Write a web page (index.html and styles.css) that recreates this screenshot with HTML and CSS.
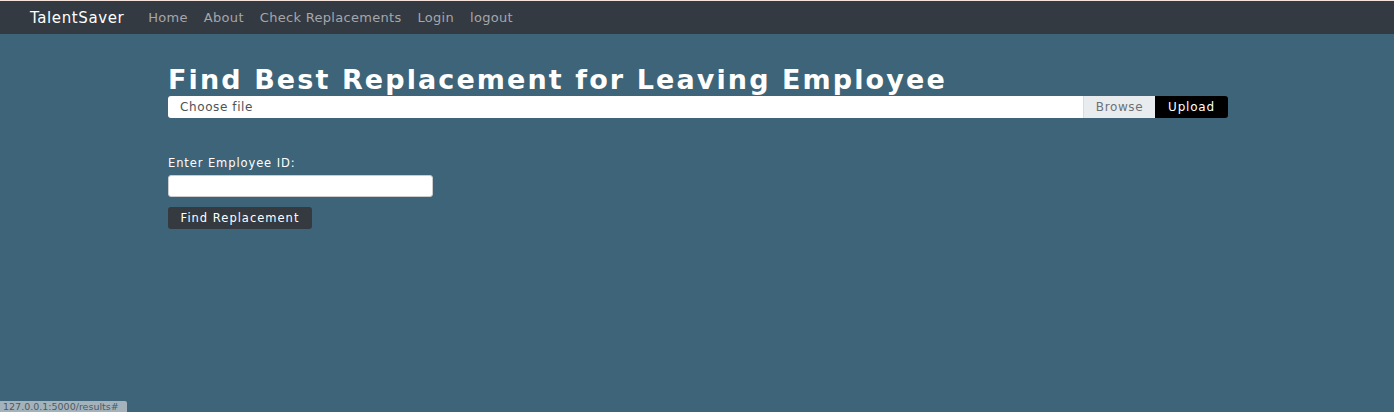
FILE: index.html
```html
<!DOCTYPE html>
<html lang="en">
<head>
<meta charset="utf-8">
<title>TalentSaver</title>
<link rel="stylesheet" href="styles.css">
</head>
<body>
<div class="topline"></div>
<nav class="navbar">
  <a class="brand" href="#">TalentSaver</a>
  <ul class="nav-links">
    <li><a href="#">Home</a></li>
    <li><a href="#">About</a></li>
    <li><a href="#">Check Replacements</a></li>
    <li><a href="#">Login</a></li>
    <li><a href="#">logout</a></li>
  </ul>
</nav>
<main class="container">
  <h1 class="title">Find Best Replacement for Leaving Employee</h1>
  <form class="upload-form">
    <div class="file-input">
      <span class="file-label">Choose file</span>
      <span class="browse">Browse</span>
    </div>
    <button type="button" class="btn-upload">Upload</button>
  </form>
  <form class="find-form">
    <label class="field-label" for="emp">Enter Employee ID:</label>
    <input id="emp" class="text-input" type="text">
    <button type="button" class="btn-find">Find Replacement</button>
  </form>
</main>
<div class="status">127.0.0.1:5000/results#</div>
</body>
</html>
```

FILE: styles.css
```css
* { box-sizing: border-box; }
html, body { height: 100%; }
body {
  margin: 0;
  background: #3d6478;
  font-family: "DejaVu Sans", "Open Sans", sans-serif;
  color: #fff;
  overflow: hidden;
}
.topline { height: 1px; background: #f3e3dc; }
.navbar {
  height: 33px;
  background: #343a42;
  display: flex;
  align-items: center;
  padding-left: 30px;
}
.brand {
  color: #fff;
  text-decoration: none;
  font-size: 15px;
  letter-spacing: 0.6px;
  margin-right: 16px;
}
.nav-links {
  list-style: none;
  margin: 0;
  padding: 0;
  display: flex;
}
.nav-links a {
  display: block;
  padding: 0 8px;
  color: #a4a7ab;
  text-decoration: none;
  font-size: 13px;
  letter-spacing: 0.3px;
}
.container {
  width: 1060px;
  margin-left: calc(50% - 529px);
  padding-top: 30px;
}
.title {
  margin: 0;
  font-size: 27px;
  font-weight: bold;
  letter-spacing: 2.1px;
  line-height: 32px;
}
.upload-form {
  display: flex;
  height: 22px;
}
.file-input {
  flex: 1;
  display: flex;
  background: #fff;
  border-radius: 3px 0 0 3px;
  overflow: hidden;
}
.file-label {
  flex: 1;
  color: #4c5257;
  font-size: 12px;
  letter-spacing: 0.6px;
  line-height: 22px;
  padding-left: 12px;
}
.browse {
  width: 72px;
  background: #e9ecef;
  color: #6c7177;
  font-size: 12px;
  letter-spacing: 0.6px;
  line-height: 22px;
  text-align: center;
  border-left: 1px solid #d8dcdf;
}
.btn-upload {
  width: 73px;
  background: #000;
  color: #fff;
  border: none;
  border-radius: 0 3px 3px 0;
  font: 12px "DejaVu Sans", sans-serif;
  letter-spacing: 0.8px;
  padding: 0;
}
.find-form {
  display: flex;
  flex-direction: column;
  align-items: flex-start;
  padding-top: 38px;
}
.field-label {
  font-size: 11.5px;
  letter-spacing: 0.9px;
  line-height: 14px;
  margin-bottom: 5px;
}
.text-input {
  width: 265px;
  height: 22px;
  border: 1px solid #ccc;
  border-radius: 3px;
  background: #fff;
  margin: 0 0 10px;
}
.btn-find {
  height: 22px;
  width: 144px;
  background: #343a40;
  color: #fff;
  border: none;
  border-radius: 3px;
  font: 11.5px "DejaVu Sans", sans-serif;
  letter-spacing: 1px;
  padding: 0;
}
.status {
  position: absolute;
  left: 0;
  bottom: 0;
  height: 11px;
  width: 127px;
  background: #a4b3bb;
  color: #4a5a63;
  font-size: 9.5px;
  line-height: 11px;
  padding-left: 3px;
  border-top-right-radius: 2px;
  white-space: nowrap;
  overflow: hidden;
}
```
